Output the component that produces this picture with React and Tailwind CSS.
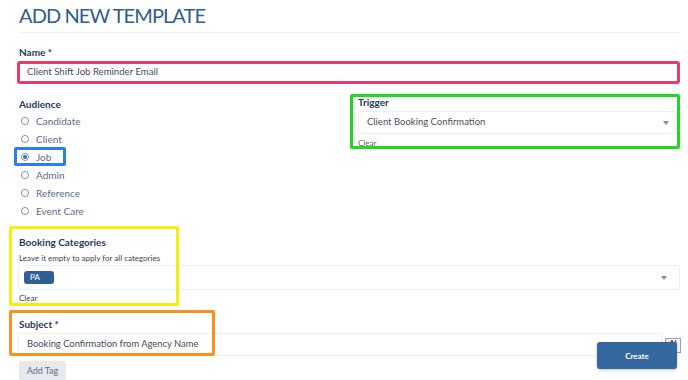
import React from 'react'

const audiences = ['Candidate', 'Client', 'Job', 'Admin', 'Reference', 'Event Care']

function Caret() {
  return <span className="w-0 h-0 border-l-[3px] border-r-[3px] border-t-[4px] border-l-transparent border-r-transparent border-t-[#8a8f98]" />
}

export default function App() {
  const selected = 'Job'
  return (
    <div className="relative w-[688px] h-[380px] overflow-hidden bg-white font-['Lato',sans-serif]">
      <div className="px-[19px] pt-[3px]">
        <h1 className="text-[20px] leading-[24px] text-[#2f5d8f] tracking-[-0.9px]">ADD NEW TEMPLATE</h1>
        <div className="mt-[5px] h-px bg-[#eceef1] w-[661px]" />

        <div className="mt-[13px] text-[10px] leading-[12px] font-bold text-[#1f3a5c]">Name *</div>
        <div className="mt-[3px] -ml-[2px] w-[663px] h-[23px] border-[3px] border-[#ea3a6c] rounded-[3px] flex items-center pl-[7px] text-[9.6px] text-[#454c59]">
          Client Shift Job Reminder Email
        </div>

        <div className="flex mt-[10px]">
          <div className="w-[331px] shrink-0 pt-[4px]">
            <div className="text-[10px] leading-[12px] font-bold text-[#1f3a5c]">Audience</div>
            <div className="mt-[2px] flex flex-col">
              {audiences.map(a => (
                <div key={a} className="h-[18px] flex items-center">
                  <span className="ml-[2px] w-[8px] h-[8px] rounded-full border border-[#8c9099] flex items-center justify-center">
                    {a === selected && <span className="w-[4px] h-[4px] rounded-full bg-[#2f6fd0]" />}
                  </span>
                  <span className="ml-[7px] text-[10px] text-[#5b6d8a]">{a}</span>
                </div>
              ))}
            </div>
          </div>
          <div className="w-[330px] shrink-0 h-[55px] overflow-hidden border-[3px] border-[#22d622] rounded-[2px] pl-[5px]">
            <div className="-mt-[1px] text-[10px] leading-[12px] font-bold text-[#1f3a5c]">Trigger</div>
            <div className="mt-[3px] h-[23px] border border-[#eceef1] rounded-[2px] flex items-center justify-between pl-[8px] pr-[7px]">
              <span className="text-[9.5px] text-[#4a505c]">Client Booking Confirmation</span>
              <Caret />
            </div>
            <div className="mt-[4px] text-[8px] leading-[10px] text-[#5b5f66]">Clear</div>
          </div>
        </div>

        <div className="mt-[16px] text-[10px] leading-[12px] font-bold text-[#1f3a5c]">Booking Categories</div>
        <div className="mt-[5px] text-[8px] leading-[10px] text-[#3d4452]">Leave it empty to apply for all categories</div>
        <div className="mt-[2px] -ml-[1px] w-[662px] h-[25px] border border-[#eceef1] rounded-[3px] flex items-center justify-between pl-[5px] pr-[12px]">
          <span className="h-[13px] w-[30px] rounded-[3px] bg-[#2f5f98] text-white text-[8px] leading-[13px] pl-[6px]">PA</span>
          <Caret />
        </div>
        <div className="mt-[3px] text-[8px] leading-[10px] text-[#3d4452]">Clear</div>

        <div className="mt-[15px] text-[10px] leading-[12px] font-bold text-[#1f3a5c]">Subject *</div>
        <div className="mt-[3px] flex items-start">
          <div className="-ml-[1px] shrink-0 w-[644px] h-[23px] border border-[#eceef1] rounded-[3px] flex items-center pl-[8px] text-[9.4px] text-[#454c59]">
            Booking Confirmation from Agency Name
          </div>
          <div className="shrink-0 mt-[5px] ml-[3px] w-[16px] h-[15px] border border-[#9aa0a8] bg-[#f4f5f7] text-[7px] font-bold text-[#333] flex items-start justify-center leading-[9px]">AI</div>
        </div>
        <button className="mt-[4px] h-[19px] w-[47px] rounded-[2px] bg-[#e6e9ee] text-[9px] text-[#5b6d8a]">Add Tag</button>
      </div>

      <button className="absolute left-[597px] top-[342px] w-[80px] h-[27px] rounded-[3px] bg-[#3567a0] text-white text-[8px] font-bold shadow-[0_1px_3px_rgba(0,0,0,0.25)]">Create</button>

      <div className="absolute left-[14px] top-[147px] w-[52px] h-[19px] border-[3px] border-[#2a7fe8] rounded-[2px]" />
      <div className="absolute left-[9px] top-[226px] w-[170px] h-[80px] border-[3px] border-[#f5ee0c] rounded-[2px]" />
      <div className="absolute left-[9px] top-[310px] w-[206px] h-[46px] border-[3px] border-[#f7921e] rounded-[2px]" />
    </div>
  )
}
